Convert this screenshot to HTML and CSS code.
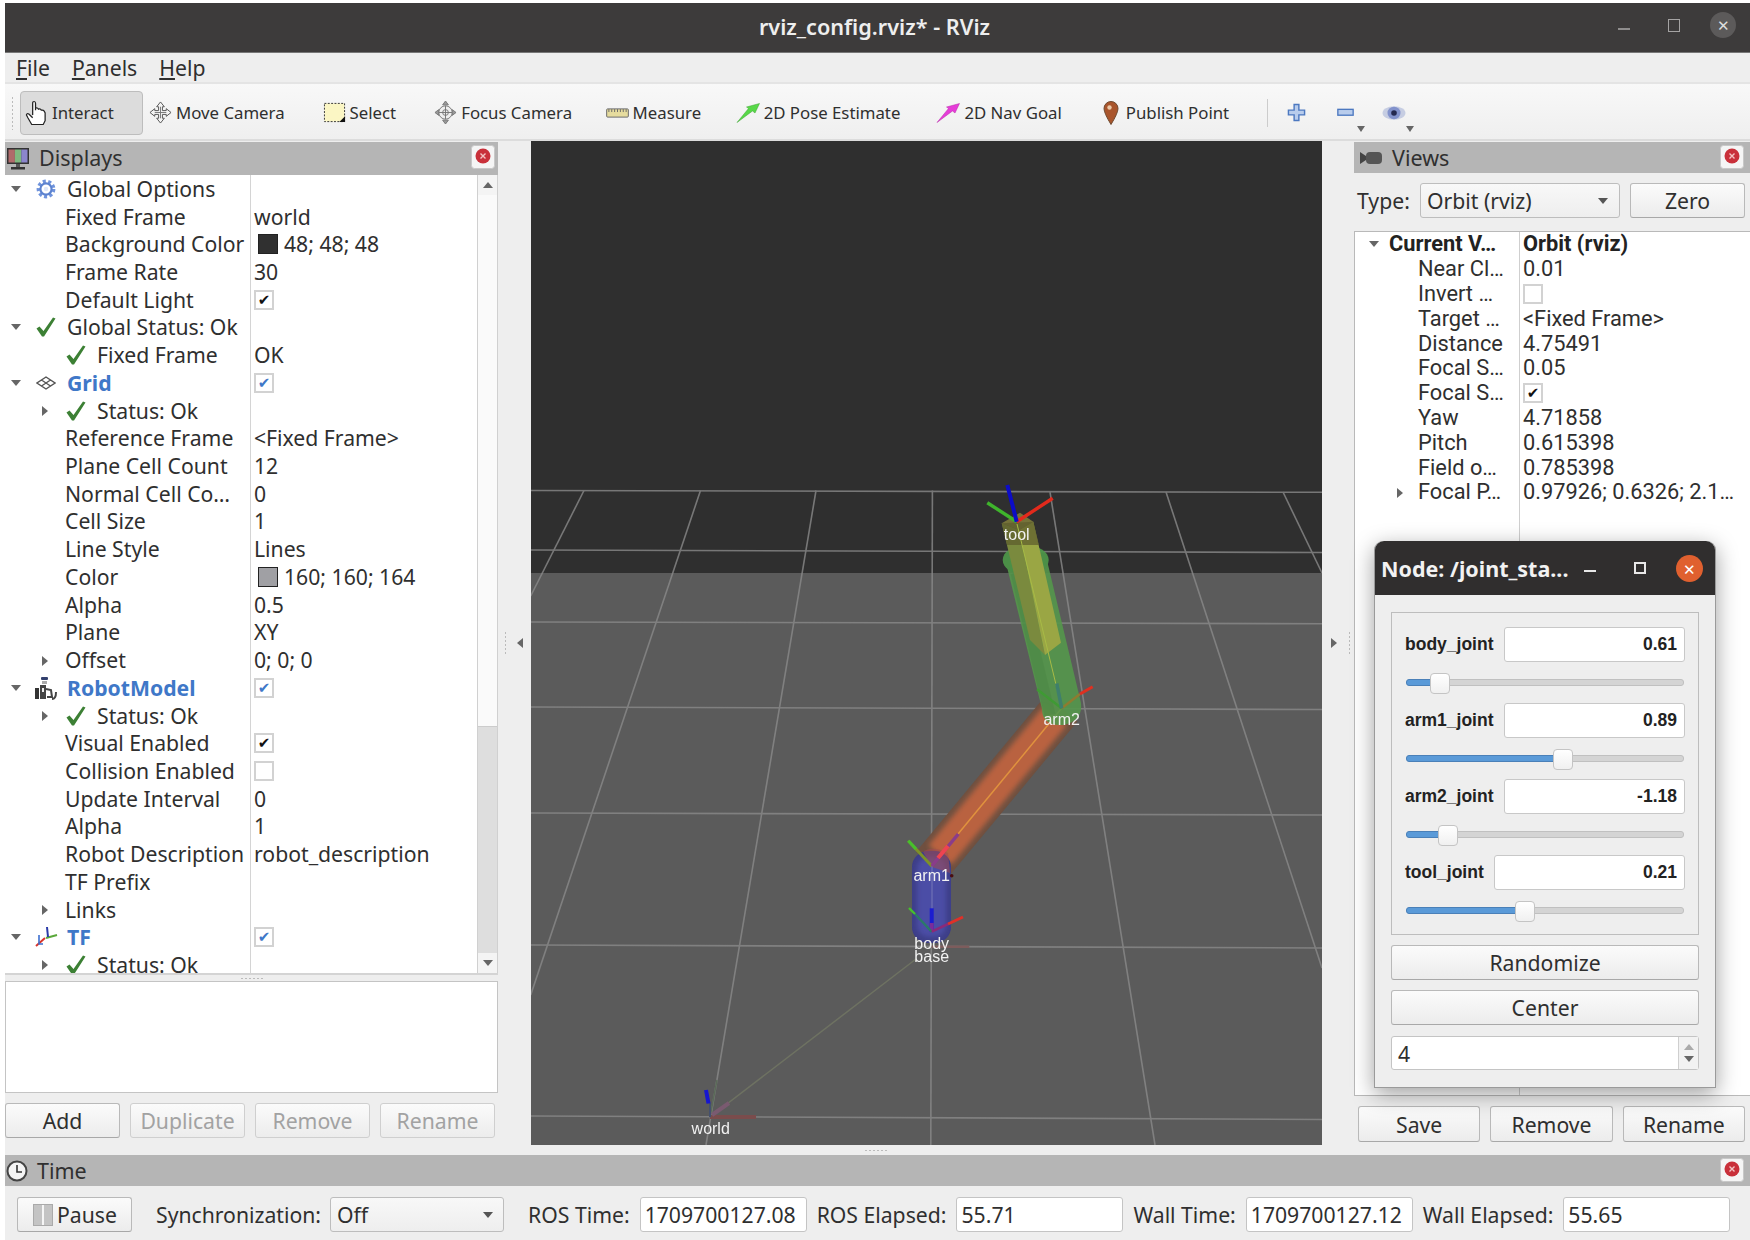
FILE: index.html
```html
<!DOCTYPE html>
<html lang="en">
<head>
<meta charset="utf-8">
<title>rviz_config.rviz* - RViz</title>
<link rel="stylesheet" href="styles.css">
</head>
<body>
<svg class="defs" aria-hidden="true">
  <defs>
    <filter id="soft" x="-20%" y="-20%" width="140%" height="140%"><feGaussianBlur stdDeviation="2.600"/></filter>
  </defs>
  <symbol id="i-check" viewBox="0 0 20 20"><path d="M0.5 11.5 L3.5 9.5 L7.5 14 L17 0.5 L19.5 1.5 L8 19.5 L6 19.5 Z" fill="#3c8034"/></symbol>
  <symbol id="i-gear" viewBox="0 0 20 20"><circle cx="10" cy="10" r="7.6" fill="none" stroke="#6f93dc" stroke-width="3.6" stroke-dasharray="3 2.4"/><circle cx="10" cy="10" r="5.6" fill="none" stroke="#5c82cf" stroke-width="2.2"/><circle cx="10" cy="10" r="2.2" fill="#dfe8fa"/></symbol>
  <symbol id="i-grid" viewBox="0 0 20 14"><path d="M10 1 L19 7 L10 13 L1 7 Z M5.5 4 L14.5 10 M14.5 4 L5.5 10" fill="none" stroke="#555" stroke-width="1.4"/></symbol>
  <symbol id="i-robot" viewBox="0 0 24 24"><rect x="7" y="1" width="7" height="3" rx="1" fill="#33406e"/><rect x="8" y="5" width="5" height="3" fill="#aaa"/><rect x="1" y="12" width="4" height="11" fill="#333"/><rect x="6" y="9" width="6" height="14" fill="#444"/><rect x="8" y="12" width="2" height="4" fill="#eee"/><path d="M12 13 L17 14 L18 21 L13 21 M22 16 Q22 23 18 23" fill="none" stroke="#444" stroke-width="2"/></symbol>
  <symbol id="i-tf" viewBox="0 0 24 24"><path d="M2 21 L11 13" stroke="#d8342c" stroke-width="2" fill="none"/><path d="M12 13 L23 10" stroke="#5aa83a" stroke-width="2" fill="none"/><path d="M14 12 L13 2" stroke="#2a3aa8" stroke-width="2" fill="none"/><path d="M5 10 L5 19 L9 19" stroke="#3c6fd0" stroke-width="1.6" fill="none"/></symbol>
  <symbol id="i-monitor" viewBox="0 0 24 24"><rect x="1" y="1" width="22" height="16" fill="#333"/><rect x="2.5" y="2.5" width="6.4" height="13" fill="#b06a6a"/><rect x="8.9" y="2.5" width="6.4" height="13" fill="#7fb87f"/><rect x="15.3" y="2.5" width="6.2" height="13" fill="#8b86cc"/><rect x="10" y="17" width="4" height="3" fill="#555"/><rect x="5" y="20" width="14" height="2.5" fill="#333"/></symbol>
  <symbol id="i-camera" viewBox="0 0 24 16"><path d="M1 2 L7 6 L7 10 L1 14 Z" fill="#444"/><rect x="7" y="2" width="16" height="12" rx="4" fill="#555"/></symbol>
  <symbol id="i-clock" viewBox="0 0 22 22"><circle cx="11" cy="11" r="9.5" fill="#f4f4f4" stroke="#444" stroke-width="2"/><path d="M11 5 L11 12 L16 12" fill="none" stroke="#333" stroke-width="1.6"/></symbol>
  <symbol id="i-close" viewBox="0 0 24 24"><rect x="0.5" y="0.5" width="23" height="23" rx="3" fill="#f5f5f5" stroke="#c8c8c8"/><circle cx="12" cy="11" r="7.5" fill="#c9303a"/><path d="M9.5 8.5 L14.5 13.5 M14.5 8.5 L9.5 13.5" stroke="#f3c4c4" stroke-width="1.4"/></symbol>
  <symbol id="i-hand" viewBox="0 0 24 26"><path d="M8 15 L8 3 Q8 1 9.5 1 Q11 1 11 3 L11 10 L11 8 Q13 7 14 9 Q16 8 17 10 Q19 9.500 20 11 L21 13 L21 21 L19 25 L7 25 L3 18 L1.500 15 Q2 13 4 14 L8 18" fill="#fff" stroke="#222" stroke-width="1.300"/></symbol>
  <symbol id="i-move" viewBox="0 0 24 24"><path d="M12 1 L16 6 L14 6 L14 10 L18 10 L18 8 L23 12 L18 16 L18 14 L14 14 L14 18 L16 18 L12 23 L8 18 L10 18 L10 14 L6 14 L6 16 L1 12 L6 8 L6 10 L10 10 L10 6 L8 6 Z" fill="#f4f4f4" stroke="#555"/><path d="M6 12 H18 M12 6 V18" stroke="#777"/></symbol>
  <symbol id="i-select" viewBox="0 0 24 24"><rect x="1.500" y="2.500" width="21" height="19" fill="#fbf6c4" stroke="#333" stroke-dasharray="2 1.500"/><path d="M23 16 L23 22 L17 22 Z" fill="#111"/></symbol>
  <symbol id="i-focus" viewBox="0 0 24 26"><path d="M12 1 L15 5 L9 5 Z M12 25 L15 21 L9 21 Z M1 13 L5 10 L5 16 Z M23 13 L19 10 L19 16 Z" fill="#999" stroke="#777"/><circle cx="12" cy="13" r="7" fill="#eee" stroke="#777"/><path d="M5 13 H19 M12 6 V20" stroke="#777"/><circle cx="12" cy="13" r="3" fill="none" stroke="#777"/></symbol>
  <symbol id="i-measure" viewBox="0 0 24 12"><rect x="0.700" y="1.700" width="22.600" height="8.600" rx="1" fill="#e6dc9e" stroke="#666"/><path d="M3 2 V5 M6 2 V5 M9 2 V5 M12 2 V5 M15 2 V5 M18 2 V5 M21 2 V5" stroke="#666"/></symbol>
  <symbol id="i-pose" viewBox="0 0 24 20"><path d="M23.500 0.500 L19 10 L16.500 8 L1 19.500 L12.500 5.500 L10.500 4 Z" fill="#58d848" stroke="#3ca530" stroke-width="0.500"/></symbol>
  <symbol id="i-nav" viewBox="0 0 24 20"><path d="M23.500 0.500 L19 10 L16.500 8 L1 19.500 L12.500 5.500 L10.500 4 Z" fill="#e63cd8" stroke="#b828a8" stroke-width="0.500"/></symbol>
  <symbol id="i-pin" viewBox="0 0 16 24"><path d="M8 23.500 Q1 12 1 7.500 A7 7 0 0 1 15 7.500 Q15 12 8 23.500 Z" fill="#a9552c" stroke="#6f4a30"/><circle cx="6.500" cy="6.500" r="2.200" fill="#ecc9a8"/></symbol>
  <symbol id="i-plus" viewBox="0 0 20 20"><path d="M7.500 1.500 H12.500 V7.500 H18.500 V12.500 H12.500 V18.500 H7.500 V12.500 H1.500 V7.500 H7.500 Z" fill="#b8ccec" stroke="#4c78c0" stroke-width="1.500"/></symbol>
  <symbol id="i-minus" viewBox="0 0 20 10"><rect x="1.500" y="1.500" width="17" height="6.500" fill="#b8ccec" stroke="#4c78c0" stroke-width="1.500"/></symbol>
  <symbol id="i-eye" viewBox="0 0 24 14"><ellipse cx="12" cy="7" rx="11.500" ry="6.800" fill="#c6cde2"/><ellipse cx="12" cy="7" rx="6.500" ry="6.200" fill="#8292cc"/><circle cx="12" cy="7" r="2.800" fill="#23284f"/></symbol>
</svg>

<div class="app">
  <header class="titlebar">
    <span class="title">rviz_config.rviz* - RViz</span>
    <div class="winbtns">
      <span class="win-min"></span>
      <span class="win-max"></span>
      <span class="win-close">✕</span>
    </div>
  </header>

  <nav class="menubar">
    <span class="menu"><u>F</u>ile</span>
    <span class="menu"><u>P</u>anels</span>
    <span class="menu"><u>H</u>elp</span>
  </nav>

  <div class="toolbar">
    <span class="grip"></span>
    <div class="tool active"><svg class="ti ti-hand"><use href="#i-hand"/></svg>Interact</div>
    <div class="tool first"><svg class="ti"><use href="#i-move"/></svg>Move Camera</div>
    <div class="tool"><svg class="ti"><use href="#i-select"/></svg>Select</div>
    <div class="tool tool-focus"><svg class="ti ti-tall"><use href="#i-focus"/></svg>Focus Camera</div>
    <div class="tool tool-measure"><svg class="ti ti-flat"><use href="#i-measure"/></svg>Measure</div>
    <div class="tool tool-pose"><svg class="ti ti-arrow"><use href="#i-pose"/></svg>2D Pose Estimate</div>
    <div class="tool tool-nav"><svg class="ti ti-arrow"><use href="#i-nav"/></svg>2D Nav Goal</div>
    <div class="tool tool-pin"><svg class="ti ti-pin"><use href="#i-pin"/></svg>Publish Point</div>
    <span class="tsep"></span>
    <svg class="tb-plus"><use href="#i-plus"/></svg>
    <div class="tb-drop"><svg class="tb-minus"><use href="#i-minus"/></svg><span class="tri-small"></span></div>
    <div class="tb-drop tb-drop-eye"><svg class="tb-eye"><use href="#i-eye"/></svg><span class="tri-small"></span></div>
  </div>

  <main class="workspace">
    <section class="left">
      <div class="dockhead"><svg class="dh-icon"><use href="#i-monitor"/></svg><span class="dh-title">Displays</span><svg class="dh-close"><use href="#i-close"/></svg></div>
      <div class="treewrap">
        <div class="tree">
          <div class="row"><span class="name top"><i class="tw down"></i><span class="ico"><svg class="ic"><use href="#i-gear"/></svg></span>Global Options</span><span class="val"></span></div>
          <div class="row"><span class="name plain">Fixed Frame</span><span class="val">world</span></div>
          <div class="row"><span class="name plain">Background Color</span><span class="val"><i class="swatch dark"></i>48; 48; 48</span></div>
          <div class="row"><span class="name plain">Frame Rate</span><span class="val">30</span></div>
          <div class="row"><span class="name plain">Default Light</span><span class="val"><i class="cb on"></i></span></div>
          <div class="row"><span class="name top"><i class="tw down"></i><span class="ico"><svg class="ic"><use href="#i-check"/></svg></span>Global Status: Ok</span><span class="val"></span></div>
          <div class="row"><span class="name sub"><i class="tw"></i><span class="ico"><svg class="ic"><use href="#i-check"/></svg></span>Fixed Frame</span><span class="val">OK</span></div>
          <div class="row"><span class="name top blue"><i class="tw down"></i><span class="ico"><svg class="ic ic-flat"><use href="#i-grid"/></svg></span>Grid</span><span class="val"><i class="cb on bluecheck"></i></span></div>
          <div class="row"><span class="name sub"><i class="tw right"></i><span class="ico"><svg class="ic"><use href="#i-check"/></svg></span>Status: Ok</span><span class="val"></span></div>
          <div class="row"><span class="name plain">Reference Frame</span><span class="val">&lt;Fixed Frame&gt;</span></div>
          <div class="row"><span class="name plain">Plane Cell Count</span><span class="val">12</span></div>
          <div class="row"><span class="name plain">Normal Cell Co…</span><span class="val">0</span></div>
          <div class="row"><span class="name plain">Cell Size</span><span class="val">1</span></div>
          <div class="row"><span class="name plain">Line Style</span><span class="val">Lines</span></div>
          <div class="row"><span class="name plain">Color</span><span class="val"><i class="swatch grey"></i>160; 160; 164</span></div>
          <div class="row"><span class="name plain">Alpha</span><span class="val">0.5</span></div>
          <div class="row"><span class="name plain">Plane</span><span class="val">XY</span></div>
          <div class="row"><span class="name sub arrowed"><i class="tw right"></i>Offset</span><span class="val">0; 0; 0</span></div>
          <div class="row"><span class="name top blue"><i class="tw down"></i><span class="ico"><svg class="ic ic-big"><use href="#i-robot"/></svg></span>RobotModel</span><span class="val"><i class="cb on bluecheck"></i></span></div>
          <div class="row"><span class="name sub"><i class="tw right"></i><span class="ico"><svg class="ic"><use href="#i-check"/></svg></span>Status: Ok</span><span class="val"></span></div>
          <div class="row"><span class="name plain">Visual Enabled</span><span class="val"><i class="cb on"></i></span></div>
          <div class="row"><span class="name plain">Collision Enabled</span><span class="val"><i class="cb"></i></span></div>
          <div class="row"><span class="name plain">Update Interval</span><span class="val">0</span></div>
          <div class="row"><span class="name plain">Alpha</span><span class="val">1</span></div>
          <div class="row"><span class="name plain">Robot Description</span><span class="val">robot_description</span></div>
          <div class="row"><span class="name plain">TF Prefix</span><span class="val"></span></div>
          <div class="row"><span class="name sub arrowed"><i class="tw right"></i>Links</span><span class="val"></span></div>
          <div class="row"><span class="name top blue"><i class="tw down"></i><span class="ico"><svg class="ic ic-big"><use href="#i-tf"/></svg></span>TF</span><span class="val"><i class="cb on bluecheck"></i></span></div>
          <div class="row"><span class="name sub"><i class="tw right"></i><span class="ico"><svg class="ic"><use href="#i-check"/></svg></span>Status: Ok</span><span class="val"></span></div>
        </div>
        <div class="scroll">
          <span class="sb-btn"><i class="tri-up"></i></span>
          <span class="sb-thumb"></span>
          <span class="sb-trough"></span>
          <span class="sb-btn"><i class="tri-down"></i></span>
        </div>
      </div>
      <div class="vsplit"><span class="dots-h"></span></div>
      <div class="descbox"></div>
      <div class="btnrow left-btns">
        <button class="btn">Add</button>
        <button class="btn off">Duplicate</button>
        <button class="btn off">Remove</button>
        <button class="btn off">Rename</button>
      </div>
    </section>

    <div class="sidegap leftgap"><span class="dots-v"></span><i class="tri-left"></i></div>

    <section class="render">
      <svg class="scene" viewBox="1 0 791 1004">
        <rect x="0" y="0" width="792" height="432" fill="#2f2f2f"/>
        <rect x="0" y="432" width="792" height="572" fill="#5b5b5b"/>
        <g fill="none" stroke="#8a8a8a" stroke-width="1.600" opacity="0.8">
          <path d="M0 349.500 L792 351.300"/>
          <path d="M0 409 L792 411.500"/>
          <path d="M0 481 L792 482.700"/>
          <path d="M0 566 L792 568.500"/>
          <path d="M0 672 L792 674"/>
          <path d="M0 804 L792 807"/>
          <path d="M0 975 L792 978.500"/>
          <path d="M402.400 349.500 L400.800 1004"/>
          <path d="M286 349.500 L176 1004"/>
          <path d="M170.500 349.500 L0.700 854"/>
          <path d="M54 349.500 L0.700 455"/>
          <path d="M520 351 L625 1004"/>
          <path d="M636 351 L792 827"/>
          <path d="M753 351 L792 432"/>
        </g>

        <path d="M180 976 L386 818" stroke="#6e7262" stroke-width="1.500" fill="none"/>
        <path d="M180 976 L226 976" stroke="#7a4c4c" stroke-width="4" fill="none"/>
        <path d="M180 976 L187 939" stroke="#5a6a58" stroke-width="1.500" fill="none"/>
        <path d="M180 976 L180 962" stroke="#44506e" stroke-width="2" fill="none"/>
        <path d="M176 949 L178.500 962.500" stroke="#1616d0" stroke-width="4" fill="none"/>
        <path d="M182 974 L199 962" stroke="#7a5a70" stroke-width="4" fill="none"/>

        <path d="M401.700 805.700 L439.300 805.700" stroke="#7d5c5c" stroke-width="2.500" fill="none"/>

        <path d="M401.700 724 L531.700 567.300" stroke="#6f5040" stroke-width="41" fill="none"/>
        <path d="M410 714 L525 575" stroke="#b9623f" stroke-width="30" fill="none" filter="url(#soft)"/>
        <path d="M428 693 L531.700 567.300" stroke="#e0923e" stroke-width="1.500" fill="none"/>

        <rect x="382" y="710" width="39" height="92" rx="16" fill="#3d3e88"/>
        <rect x="387" y="716" width="29" height="80" rx="12" fill="#4b4da6" filter="url(#soft)"/>
        <path d="M393 711 Q402 704 418 712 L420 732 L402 726 Z" fill="#a34a52" opacity="0.55"/>
        <path d="M402 725 L402 790" stroke="#7678b8" stroke-width="1" fill="none"/>

        <path d="M401.700 725 L378.300 699.700" stroke="#7d9228" stroke-width="3" fill="none"/>
        <path d="M386 708 L378.300 699.700" stroke="#46c02c" stroke-width="3" fill="none"/>
        <path d="M401.700 725 L428.300 693" stroke="#8a3c8a" stroke-width="3.500" fill="none"/>
        <path d="M408 717 L418 705" stroke="#ee4450" stroke-width="4" fill="none"/>
        <circle cx="421.700" cy="734.700" r="1.800" fill="#4a0d10"/>

        <path d="M401.700 790.700 L401.700 767.300" stroke="#1c1cd0" stroke-width="4" fill="none"/>
        <path d="M401.700 782 L401.700 790" stroke="#7a2d9a" stroke-width="4" fill="none"/>
        <path d="M401.700 790.700 L385 773" stroke="#2a7a68" stroke-width="2.400" fill="none"/>
        <path d="M385 773 L379 767" stroke="#46c02c" stroke-width="2.400" fill="none"/>
        <path d="M401.700 790.700 L418 783" stroke="#8a2a7a" stroke-width="2.500" fill="none"/>
        <path d="M418 783 L433 776" stroke="#e03028" stroke-width="3" fill="none"/>

        <g opacity="0.9">
          <path d="M515.700 414 L551 562 Q553 580 533 584 Q512 585 512 568 L476.500 424 Z" fill="#55974c"/>
          <ellipse cx="495.700" cy="419" rx="23" ry="15" fill="#4f9a4a"/>
        </g>
        <path d="M486 432 L520 574" stroke="#3f7a3c" stroke-width="11" opacity="0.25" fill="none"/>

        <path d="M471.700 382.300 L490 371.700 L503.300 380.700 L489.300 389 Z" fill="#76733a"/>
        <path d="M471.700 382.300 L489.300 389 L515 514 L500 499 Z" fill="#7a8a3e"/>
        <path d="M489.300 389 L503.300 380.700 L531 501.700 L515 514 Z" fill="#9aa644"/>
        <path d="M471.700 382.300 L503.300 380.700 L509 404 L477 404 Z" fill="#5f5e2e" opacity="0.75"/>
        <path d="M487 383 L531.700 567" stroke="#a8bb46" stroke-width="1" fill="none"/>

        <path d="M486.700 380.700 L457.300 361.700" stroke="#3fb42c" stroke-width="3.400" fill="none"/>
        <path d="M486.700 380.700 L522.700 357.300" stroke="#e22a1c" stroke-width="3.400" fill="none"/>
        <path d="M486.700 380.700 L477.300 344" stroke="#0c0cc8" stroke-width="4" fill="none"/>

        <path d="M531.700 567.300 L507 548.300" stroke="#3f9a34" stroke-width="2.400" fill="none"/>
        <path d="M531.700 567.300 L550 553" stroke="#8f7b30" stroke-width="2.400" fill="none"/>
        <path d="M550 553 L562.700 545.700" stroke="#e03020" stroke-width="3" fill="none"/>
        <path d="M531.700 567.300 L526.700 542.300" stroke="#3f7f6c" stroke-width="3.500" fill="none"/>

        <text class="lbl" x="486.700" y="399">tool</text>
        <text class="lbl" x="531.700" y="584">arm2</text>
        <text class="lbl" x="401.700" y="740">arm1</text>
        <text class="lbl" x="401.700" y="808">body</text>
        <text class="lbl" x="401.700" y="821">base</text>
        <text class="lbl" x="180.700" y="993">world</text>
      </svg>
    </section>

    <div class="sidegap rightgap"><i class="tri-right"></i><span class="dots-v"></span></div>

    <section class="right">
      <div class="dockhead"><svg class="dh-cam"><use href="#i-camera"/></svg><span class="dh-title">Views</span><svg class="dh-close"><use href="#i-close"/></svg></div>
      <div class="typerow">
        <span class="tlabel">Type:</span>
        <div class="combo combo-type">Orbit (rviz)<i class="tri-down"></i></div>
        <button class="btn zero">Zero</button>
      </div>
      <div class="ptree">
        <div class="prow strong"><span class="pname head"><i class="tw down"></i>Current V…</span><span class="pval">Orbit (rviz)</span></div>
        <div class="prow"><span class="pname">Near Cl…</span><span class="pval">0.01</span></div>
        <div class="prow"><span class="pname">Invert …</span><span class="pval"><i class="cb"></i></span></div>
        <div class="prow"><span class="pname">Target …</span><span class="pval">&lt;Fixed Frame&gt;</span></div>
        <div class="prow"><span class="pname">Distance</span><span class="pval">4.75491</span></div>
        <div class="prow"><span class="pname">Focal S…</span><span class="pval">0.05</span></div>
        <div class="prow"><span class="pname">Focal S…</span><span class="pval"><i class="cb on"></i></span></div>
        <div class="prow"><span class="pname">Yaw</span><span class="pval">4.71858</span></div>
        <div class="prow"><span class="pname">Pitch</span><span class="pval">0.615398</span></div>
        <div class="prow"><span class="pname">Field o…</span><span class="pval">0.785398</span></div>
        <div class="prow"><span class="pname withtw"><i class="tw right"></i>Focal P…</span><span class="pval">0.97926; 0.6326; 2.1…</span></div>
      </div>
      <div class="btnrow right-btns">
        <button class="btn">Save</button>
        <button class="btn">Remove</button>
        <button class="btn">Rename</button>
      </div>
    </section>
  </main>

  <div class="hsplit"><span class="dots-h"></span></div>

  <section class="timepanel">
    <div class="dockhead timehead"><svg class="dh-clock"><use href="#i-clock"/></svg><span class="dh-title">Time</span><svg class="dh-close"><use href="#i-close"/></svg></div>
    <div class="timerow">
      <button class="btn pause"><i class="pausebars"></i>Pause</button>
      <span class="tl tl-sync">Synchronization:</span>
      <div class="combo combo-sync">Off<i class="tri-down"></i></div>
      <span class="tl tl-ros">ROS Time:</span>
      <span class="field">1709700127.08</span>
      <span class="tl">ROS Elapsed:</span>
      <span class="field">55.71</span>
      <span class="tl">Wall Time:</span>
      <span class="field">1709700127.12</span>
      <span class="tl">Wall Elapsed:</span>
      <span class="field">55.65</span>
    </div>
  </section>
</div>

<aside class="node">
  <div class="node-title">
    <span class="node-name">Node: /joint_sta...</span>
    <span class="nb-min"></span>
    <span class="nb-max"></span>
    <span class="nb-close">✕</span>
  </div>
  <div class="node-body">
    <div class="group">
      <div class="joint"><span class="jn">body_joint</span><span class="jv">0.61</span></div>
      <div class="slider"><span class="fill f1"></span><span class="rest"></span></div>
      <div class="joint"><span class="jn">arm1_joint</span><span class="jv">0.89</span></div>
      <div class="slider"><span class="fill f2"></span><span class="rest"></span></div>
      <div class="joint"><span class="jn">arm2_joint</span><span class="jv">-1.18</span></div>
      <div class="slider"><span class="fill f3"></span><span class="rest"></span></div>
      <div class="joint"><span class="jn">tool_joint</span><span class="jv">0.21</span></div>
      <div class="slider"><span class="fill f4"></span><span class="rest"></span></div>
    </div>
    <button class="btn nbtn">Randomize</button>
    <button class="btn nbtn">Center</button>
    <div class="spin"><span class="spin-v">4</span><span class="spin-a"><i class="tri-up"></i><i class="tri-down"></i></span></div>
  </div>
</aside>
</body>
</html>
```

FILE: styles.css
```css
* { box-sizing: border-box; }
html, body { margin: 0; padding: 0; height: 100%; }
body {
  background: #fff;
  width: 1750px;
  height: 1240px;
  overflow: hidden;
  font-family: "Noto Sans", sans-serif;
  font-size: 21.200px;
  color: #2f2f2f;
  position: relative;
}
.defs { position: absolute; width: 0; height: 0; }

.app {
  margin: 3px 0 0 5px;
  width: 1745px;
  height: 1237px;
  background: #eee;
  display: flex;
  flex-direction: column;
}

.titlebar {
  height: 50px;
  background: #3d3b3b;
  border-bottom: 1px solid #777;
  display: flex;
  align-items: center;
  justify-content: center;
  position: relative;
  flex: none;
}
.title { color: #eee; font-weight: 600; font-size: 21.700px; margin-left: -6px; padding-bottom: 3px; }
.winbtns { position: absolute; right: 0; top: 0; height: 49px; width: 140px; }
.win-min { position: absolute; left: 8px; top: 25px; width: 12px; height: 1.500px; background: #8f8d8d; }
.win-max { position: absolute; left: 58px; top: 16px; width: 12px; height: 13px; border: 1.500px solid #a5a3a3; }
.win-close {
  position: absolute; left: 100px; top: 9px; width: 26px; height: 26px; border-radius: 50%;
  background: #5c5a5a; color: #ddd; font-size: 15px; display: flex; align-items: center; justify-content: center;
}

.menubar {
  height: 31px;
  flex: none;
  display: flex;
  align-items: center;
  padding-left: 11px;
  gap: 22px;
  background: #eee;
  border-bottom: 2px solid #e4e4e4;
  font-size: 21.200px;
}
.menu { line-height: 29px; }

.toolbar {
  height: 57px;
  flex: none;
  display: flex;
  align-items: center;
  padding: 2px 0 0 6px;
  background: linear-gradient(#f8f8f8, #efefef);
  border-bottom: 2px solid #dcdcdc;
  font-size: 16.800px;
}
.grip {
  width: 4px; height: 34px; margin-right: 5px;
  background-image: radial-gradient(#bbb 40%, transparent 45%);
  background-size: 3px 4px;
}
.tool { display: flex; align-items: center; gap: 4px; margin-right: 38px; white-space: nowrap; }
.tool.first { margin-left: -32px; }
.tool.active {
  width: 123px; height: 44px; padding-left: 4px; gap: 4px;
  background: #dcdcdc; border: 1px solid #bdbdbd; border-radius: 4px;
}
.tool-focus { margin-right: 33.500px; }
.tool-measure { margin-right: 34.500px; }
.tool-pose { margin-right: 36px; }
.tool-nav { margin-right: 37px; }
.ti { width: 23px; height: 23px; flex: none; }
.ti-hand { width: 23px; height: 28px; }
.ti-tall { height: 27px; }
.ti-flat { height: 12px; }
.ti-arrow { width: 24px; height: 20px; }
.ti-pin { width: 16px; height: 24px; margin-right: 3px; }
.tool-pin { margin-left: 4px; }
.tsep { width: 1px; height: 28px; background: #ccc; margin: 0 19px 0 0; }
.tb-plus { width: 19px; height: 19px; margin: 0 30px 0 0; }
.tb-drop { position: relative; display: flex; align-items: center; height: 14px; }
.tb-drop-eye { margin-left: 12.500px; }
.tb-minus { width: 19px; height: 9px; margin-right: 14px; }
.tb-eye { width: 24px; height: 14px; margin-right: 12px; }
.tri-small {
  position: absolute; right: 4px; top: 20px; width: 0; height: 0;
  border-left: 4px solid transparent; border-right: 4px solid transparent; border-top: 6px solid #666;
}

.workspace { display: flex; flex: none; height: 1004px; }
.left { width: 493px; flex: none; padding-top: 1px; display: flex; flex-direction: column; }
.right { width: 396px; flex: none; padding-top: 1px; display: flex; flex-direction: column; }
.render { width: 791px; flex: none; }
.scene { display: block; width: 791px; height: 1004px; filter: blur(0.4px); }
.lbl { font-family: "Liberation Sans", sans-serif; font-size: 16px; fill: #f2f2f2; text-anchor: middle; }

.sidegap { width: 32px; flex: none; display: flex; align-items: center; }
.leftgap { width: 33px; padding-left: 6px; gap: 10px; }
.rightgap { padding-left: 9px; gap: 11px; }
.dots-v {
  width: 3px; height: 24px;
  background-image: radial-gradient(#bbb 40%, transparent 45%);
  background-size: 3px 4px;
}
.dots-h {
  width: 24px; height: 3px;
  background-image: radial-gradient(#bbb 40%, transparent 45%);
  background-size: 4px 3px;
}
.tri-left { width: 0; height: 0; border-top: 5px solid transparent; border-bottom: 5px solid transparent; border-right: 6px solid #666; }
.tri-right { width: 0; height: 0; border-top: 5px solid transparent; border-bottom: 5px solid transparent; border-left: 6px solid #666; }

.dockhead {
  height: 33px;
  flex: none;
  background: #b5b5b5;
  display: flex;
  align-items: center;
  position: relative;
  font-size: 21.500px;
}
.right .dockhead { height: 31px; }
.dh-icon { width: 24px; height: 24px; margin-left: 1px; }
.dh-cam { width: 24px; height: 16px; margin-left: 5px; }
.dh-clock { width: 22px; height: 22px; margin-left: 1px; }
.dh-title { margin-left: 9px; color: #303030; padding-bottom: 2px; }
.right .dh-title, .timehead .dh-title { padding-bottom: 0; }
.dh-close { position: absolute; right: 3px; top: 3px; width: 24px; height: 24px; }
.right .dh-close, .timehead .dh-close { right: 6px; }

.treewrap { height: 798px; display: flex; background: #fff; flex: none; }
.tree {
  flex: 1;
  overflow: hidden;
  background: linear-gradient(#d4d4d4, #d4d4d4) 245px 0 / 1px 100% no-repeat #fff;
}
.row { display: flex; height: 27.720px; line-height: 24px; align-items: center; }
.name { width: 245px; flex: none; display: flex; align-items: center; white-space: nowrap; }
.name.plain { padding-left: 60px; }
.name.top { padding-left: 0; }
.name.sub { padding-left: 28px; }
.name.sub.arrowed .tw { margin-right: 8px; }
.name.blue { color: #3f78c8; font-weight: 700; }
.val { padding-left: 3px; margin-left: 1px; display: flex; align-items: center; white-space: nowrap; }
.tw { width: 24px; height: 12px; flex: none; display: flex; align-items: center; justify-content: center; }
.name.top .tw { width: 22px; }
.tw.down::before { content: ""; border-left: 5px solid transparent; border-right: 5px solid transparent; border-top: 6px solid #666; }
.tw.right::before { content: ""; border-top: 5px solid transparent; border-bottom: 5px solid transparent; border-left: 6px solid #666; }
.ico { width: 40px; flex: none; padding-left: 9px; display: flex; align-items: center; }
.ic { width: 20px; height: 20px; }
.ic-flat { height: 14px; }
.ic-big { width: 24px; height: 24px; margin-left: -2px; }
.cb {
  width: 20px; height: 20px; display: flex; align-items: center; justify-content: center; flex: none;
  background: #fff; border: 2px solid #d2d2d2; font-style: normal; font-size: 15px; line-height: 16px; color: #111;
}
.cb.on::before { content: "✔"; font-family: "DejaVu Sans", sans-serif; }
.cb.bluecheck { color: #3f78c8; }
.swatch { width: 20px; height: 20px; margin: 0 6px 0 4px; border: 1px solid #222; flex: none; }
.swatch.dark { background: #303030; }
.swatch.grey { background: #a0a0a4; }

.scroll { width: 21px; flex: none; display: flex; flex-direction: column; border-left: 1px solid #d0d0d0; border-right: 1px solid #d0d0d0; }
.sb-btn { height: 20px; flex: none; display: flex; align-items: center; justify-content: center; background: #f4f4f4; }
.sb-thumb { height: 532px; background: #fafafa; border-bottom: 1px solid #ccc; }
.sb-trough { flex: 1; background: #dedede; }
.tri-up { width: 0; height: 0; border-left: 5px solid transparent; border-right: 5px solid transparent; border-bottom: 6px solid #666; }
.tri-down { width: 0; height: 0; border-left: 5px solid transparent; border-right: 5px solid transparent; border-top: 6px solid #666; }

.vsplit { height: 8px; flex: none; display: flex; justify-content: center; align-items: center; border-top: 2px solid #d4d4d4; }
.descbox { height: 112px; flex: none; background: #fff; border: 1px solid #c4c4c4; }
.btnrow { display: flex; flex: none; }
.left-btns { margin-top: 10px; gap: 10px; }
.left-btns .btn { width: 115px; height: 35px; }
.right-btns { margin: 10px 5px 0 4px; gap: 10px; }
.right-btns .btn { flex: 1; height: 36px; }

.btn {
  font-family: "Noto Sans", sans-serif;
  font-size: 21.200px;
  color: #2f2f2f;
  background: linear-gradient(#fbfbfb, #ececec);
  border: 1px solid #b9b9b9;
  border-bottom-color: #a8a8a8;
  border-radius: 3px;
  padding: 0;
  display: flex;
  align-items: center;
  justify-content: center;
}
.btn.off { color: #a2a2a2; border-color: #cfcfcf; }

.typerow { height: 58px; flex: none; display: flex; align-items: center; padding: 0 0 3px 3px; }
.tlabel { width: 63px; }
.combo {
  display: flex; align-items: center; justify-content: space-between;
  height: 35px; padding: 0 10px 0 6px;
  background: linear-gradient(#f8f8f8, #eee);
  border: 1px solid #bdbdbd; border-radius: 3px;
}
.combo-type { width: 200px; padding-right: 11px; }
.combo .tri-down { border-top-color: #555; }
.zero { width: 115px; height: 35px; margin-left: 10px; }

.ptree {
  height: 865px;
  flex: none;
  font-family: Roboto, "Noto Sans", sans-serif;
  font-size: 21.800px;
  background: linear-gradient(#cfcfcf, #cfcfcf) 164px 0 / 1px 100% no-repeat #fff;
  border: 1px solid #b9b9b9;
  border-right: 0;
}
.prow { display: flex; height: 24.800px; line-height: 24px; align-items: center; white-space: nowrap; }
.prow.strong { font-weight: 700; color: #222; }
.pname { width: 165px; padding-left: 63px; flex: none; display: flex; align-items: center; }
.pname.head { padding-left: 4px; }
.pname.head .tw { width: 30px; }
.pname.withtw { padding-left: 33px; }
.pname.withtw .tw { width: 24px; margin-right: 6px; }
.pval { padding-left: 3px; display: flex; align-items: center; }

.hsplit { height: 10px; flex: none; display: flex; justify-content: flex-end; align-items: center; padding-right: 862px; }

.timepanel { flex: none; }
.timehead { height: 31px; }
.timerow { display: flex; align-items: center; height: 49px; padding: 11px 0 3px 12px; }
.pause { width: 115px; height: 35px; gap: 4px; flex: none; padding-left: 5px; }
.pausebars {
  width: 20px; height: 22px; flex: none; margin-left: -4px;
  background: linear-gradient(90deg, #c4c4c4 0 44%, #f6f6f6 44% 56%, #c4c4c4 56%);
  border: 1px solid #aaa;
}
.tl { margin: 0 10px; white-space: nowrap; flex: none; }
.tl-sync { margin: 0 9px 0 24px; }
.tl-ros { margin-left: 24px; }
.combo-sync { width: 174px; flex: none; }
.field {
  width: 167px; height: 35px; padding-left: 4px; display: flex; align-items: center; flex: none;
  background: #fff; border: 1px solid #c4c4c4; border-radius: 3px;
}

.node {
  position: absolute;
  left: 1374px;
  top: 541px;
  width: 342px;
  height: 547px;
  background: #eee;
  border-radius: 9px 9px 0 0;
  border: 1px solid #9a9a9a;
  border-top: 0;
  box-shadow: 0 6px 22px rgba(0, 0, 0, 0.38);
  display: flex;
  flex-direction: column;
}
.node-title {
  height: 54px; flex: none; background: #302e2e; border-radius: 9px 9px 0 0;
  position: relative; color: #f2f2f2; font-weight: 700; font-size: 21.500px;
  display: flex; align-items: center; padding-left: 6px;
}
.nb-min { position: absolute; left: 209px; top: 29px; width: 12px; height: 2px; background: #e8e8e8; }
.nb-max { position: absolute; left: 259px; top: 21px; width: 12px; height: 12px; border: 2px solid #e8e8e8; }
.nb-close {
  position: absolute; left: 301px; top: 14px; width: 27px; height: 27px; border-radius: 50%;
  background: #e0602f; color: #fff; font-size: 15px; display: flex; align-items: center; justify-content: center; font-weight: 400;
}
.node-body { padding: 17px 16px 0 16px; display: flex; flex-direction: column; }
.group {
  width: 308px; height: 323px; flex: none; border: 1px solid #bdbdbd;
  padding: 14px 13px 0 13px;
  font-family: "Liberation Sans", sans-serif; font-size: 17.500px; font-weight: 700; color: #222;
}
.joint { display: flex; align-items: center; justify-content: space-between; height: 35px; }
.jv {
  width: 181px; height: 35px; background: #fff; border: 1px solid #c8c8c8; border-radius: 3px;
  display: flex; align-items: center; justify-content: flex-end; padding-right: 7px;
}
.joint:nth-of-type(7) .jv { width: 191px; }
.slider { display: flex; align-items: center; height: 41px; margin-right: 1px; padding-left: 1px; }
.fill {
  height: 7px; background: #5a9ad8; border: 1px solid #4a80b8; border-radius: 3px 0 0 3px; position: relative; flex: none;
}
.fill::after {
  content: ""; position: absolute; right: -9px; top: -7px; width: 18px; height: 19px;
  background: linear-gradient(#fff, #f0f0f0); border: 1px solid #c4c4c4; border-radius: 4px;
}
.rest { flex: 1; height: 7px; background: #d4d4d4; border: 1px solid #c0c0c0; border-radius: 0 3px 3px 0; }
.f1 { width: 36px; }
.f2 { width: 159px; }
.f3 { width: 44px; }
.f4 { width: 121px; }
.nbtn { width: 308px; height: 35px; flex: none; margin-top: 10px; }
.spin {
  width: 308px; height: 34px; flex: none; margin-top: 11px; display: flex; justify-content: space-between;
  background: #fff; border: 1px solid #c4c4c4; border-radius: 3px;
}
.spin-v { padding-left: 6px; display: flex; align-items: center; }
.spin-a { width: 20px; background: #f2f2f2; border-left: 1px solid #cfcfcf; display: flex; flex-direction: column; align-items: center; justify-content: space-evenly; }
.spin-a .tri-up { border-bottom-color: #aaa; }
```
